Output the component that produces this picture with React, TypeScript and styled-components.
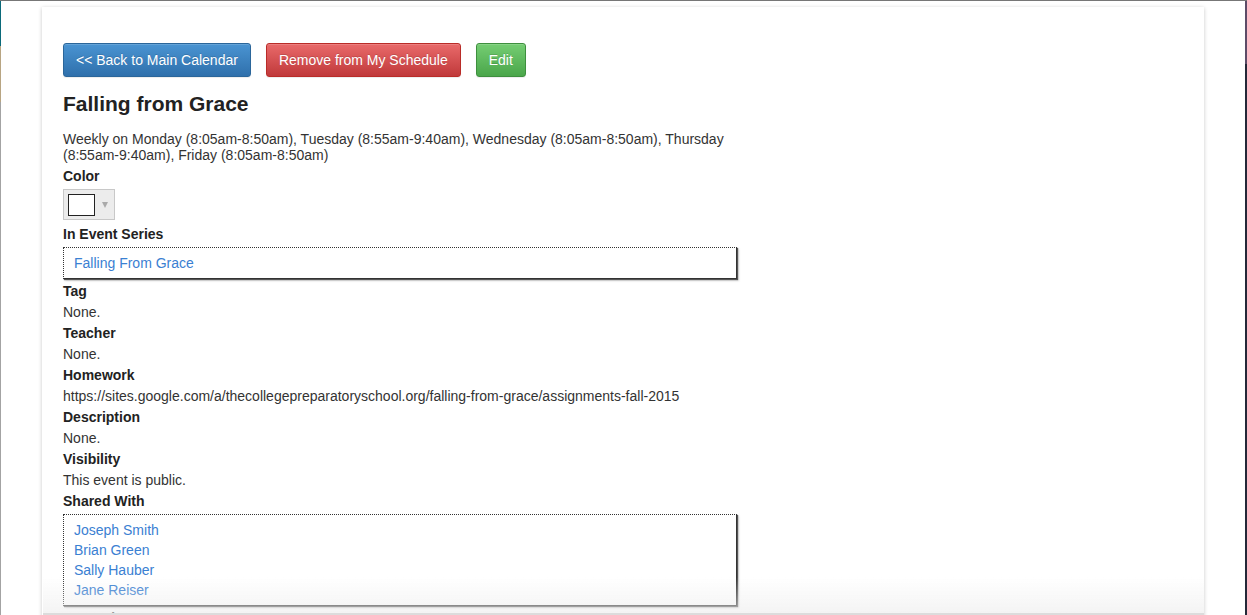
import React from "react";
import styled, { createGlobalStyle, css } from "styled-components";

const GlobalStyle = createGlobalStyle`
  html, body {
    margin: 0;
    padding: 0;
  }
  body {
    font-family: "Liberation Sans", Arial, sans-serif;
    font-size: 14px;
    color: #333;
    background:
      linear-gradient(to bottom, #0b6a7a 0 46px, #b8a582 46px 102px, #a3a3a3 102px) left top / 1px 100% no-repeat,
      linear-gradient(to bottom, #5d4c68 0 64px, #242838 64px) right top / 2px 100% no-repeat,
      #fff;
    overflow: hidden;
  }
`;

const Frame = styled.div`
  border-top: 1px solid #777;
  padding-top: 6px;
  min-height: 614px;
  box-sizing: border-box;
`;

const Panel = styled.div`
  margin-left: 42px;
  width: 1162px;
  min-height: 700px;
  box-sizing: border-box;
  padding: 36px 21px;
  background: #fff;
  box-shadow: 0 1px 4px rgba(0, 0, 0, 0.22);
`;

const Toolbar = styled.div`
  display: flex;
  gap: 15px;
`;

type Tone = "primary" | "danger" | "success";

const tones: Record<Tone, ReturnType<typeof css>> = {
  primary: css`
    background: linear-gradient(to bottom, #4a94d2 0%, #2f70ac 100%);
    border-color: #2b669a;
  `,
  danger: css`
    background: linear-gradient(to bottom, #e96a6a 0%, #c0393a 100%);
    border-color: #b92c28;
  `,
  success: css`
    background: linear-gradient(to bottom, #75cd73 0%, #4aa64a 100%);
    border-color: #3e8f3e;
  `,
};

const Button = styled.button<{ $tone: Tone }>`
  font-family: "Liberation Sans", Arial, sans-serif;
  font-size: 14px;
  line-height: 20px;
  padding: 6px 12px;
  border: 1px solid;
  border-radius: 3px;
  color: #fff;
  text-shadow: 0 -1px 0 rgba(0, 0, 0, 0.15);
  box-shadow: inset 0 1px 0 rgba(255, 255, 255, 0.15), 0 1px 1px rgba(0, 0, 0, 0.075);
  cursor: pointer;
  ${(p) => tones[p.$tone]}
`;

const Content = styled.div`
  width: 674px;
`;

const Title = styled.h3`
  margin: 15px 0 15px;
  font-size: 21px;
  line-height: 24px;
  font-weight: bold;
  color: #222;
`;

const Text = styled.p`
  margin: 0 0 5px;
  line-height: 16px;
`;

const Label = styled.div`
  margin-bottom: 5px;
  line-height: 16px;
  font-weight: bold;
  color: #222;
`;

const Swatch = styled.div`
  display: flex;
  align-items: center;
  gap: 7px;
  width: 52px;
  height: 31px;
  box-sizing: border-box;
  padding-left: 4px;
  margin-bottom: 6px;
  background: #ececec;
  border: 1px solid #c8c8c8;
`;

const SwatchColor = styled.span`
  width: 27px;
  height: 22px;
  box-sizing: border-box;
  background: #fff;
  border: 1px solid #222;
`;

const Caret = styled.span`
  width: 0;
  height: 0;
  border-left: 3px solid transparent;
  border-right: 3px solid transparent;
  border-top: 6px solid #aaa;
`;

const LinkBox = styled.div<{ $padTop: number; $padBottom: number }>`
  padding: ${(p) => p.$padTop}px 10px ${(p) => p.$padBottom}px;
  margin-bottom: 4px;
  border: 1px dotted #333;
  border-right: 1px solid #333;
  border-bottom: 1px solid #333;
  box-shadow: 1px 1px 1px #555, 2px 2px 2px rgba(0, 0, 0, 0.15);
  display: flex;
  flex-direction: column;
`;

const Link = styled.a`
  color: #3a80d2;
  text-decoration: none;
  line-height: 20px;
`;

const Fade = styled.div`
  position: fixed;
  left: 43px;
  bottom: 0;
  width: 1161px;
  height: 36px;
  background: linear-gradient(to bottom, rgba(255, 255, 255, 0) 0%, rgba(236, 236, 236, 0.6) 100%);
  border-bottom: 2px solid #dcdcdc;
  pointer-events: none;
`;

const fields: { label: string; value: string }[] = [
  { label: "Tag", value: "None." },
  { label: "Teacher", value: "None." },
  {
    label: "Homework",
    value:
      "https://sites.google.com/a/thecollegepreparatoryschool.org/falling-from-grace/assignments-fall-2015",
  },
  { label: "Description", value: "None." },
  { label: "Visibility", value: "This event is public." },
];

const sharedWith = ["Joseph Smith", "Brian Green", "Sally Hauber", "Jane Reiser"];

export default function App() {
  return (
    <>
      <GlobalStyle />
      <Frame>
        <Panel>
          <Toolbar>
            <Button $tone="primary">&lt;&lt; Back to Main Calendar</Button>
            <Button $tone="danger">Remove from My Schedule</Button>
            <Button $tone="success">Edit</Button>
          </Toolbar>
          <Content>
            <Title>Falling from Grace</Title>
            <Text>
              Weekly on Monday (8:05am-8:50am), Tuesday (8:55am-9:40am), Wednesday (8:05am-8:50am),
              Thursday (8:55am-9:40am), Friday (8:05am-8:50am)
            </Text>
            <Label>Color</Label>
            <Swatch>
              <SwatchColor />
              <Caret />
            </Swatch>
            <Label>In Event Series</Label>
            <LinkBox $padTop={5} $padBottom={5}>
              <Link href="#">Falling From Grace</Link>
            </LinkBox>
            {fields.map((f) => (
              <React.Fragment key={f.label}>
                <Label>{f.label}</Label>
                <Text>{f.value}</Text>
              </React.Fragment>
            ))}
            <Label>Shared With</Label>
            <LinkBox $padTop={5} $padBottom={5}>
              {sharedWith.map((name) => (
                <Link key={name} href="#">
                  {name}
                </Link>
              ))}
            </LinkBox>
            <Label>Created By</Label>
            <Text>Joseph Smith</Text>
          </Content>
        </Panel>
        <Fade />
      </Frame>
    </>
  );
}
